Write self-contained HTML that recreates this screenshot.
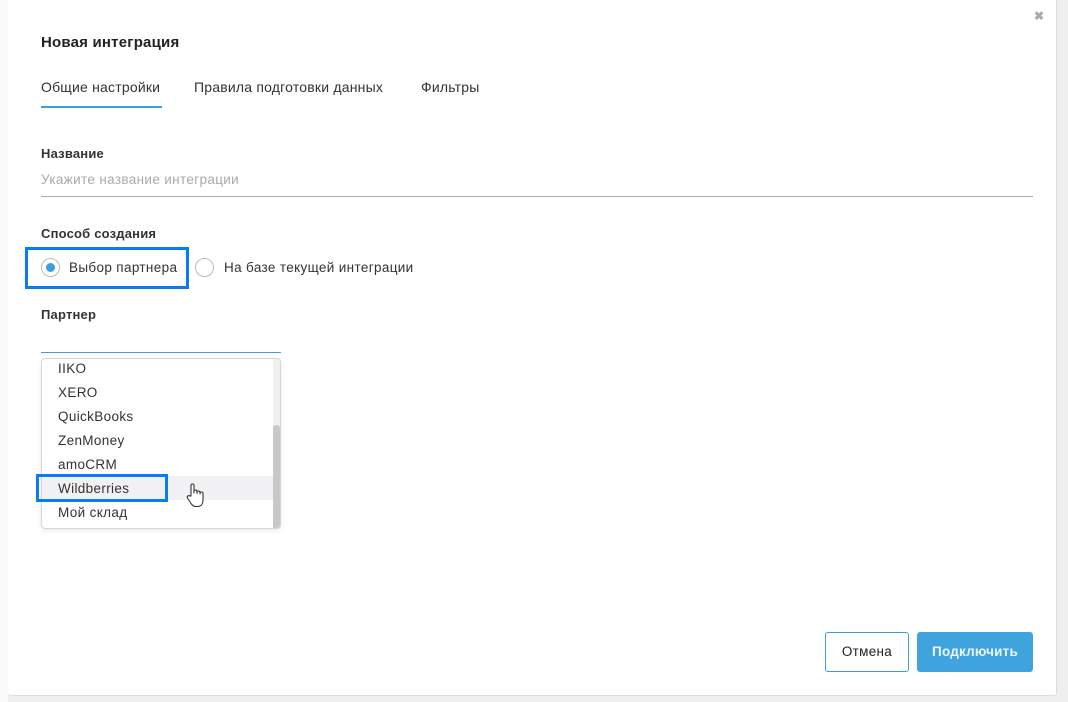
<!DOCTYPE html>
<html><head><meta charset="utf-8"><style>
*{margin:0;padding:0;box-sizing:border-box}
body{width:1068px;height:702px;background:#efefef;font-family:"Liberation Sans",sans-serif;position:relative;overflow:hidden;color:#222}
.left{position:absolute;left:0;top:0;width:8px;height:702px;background:#fafafa}
.modal{position:absolute;left:8px;top:0;width:1049px;height:696px;background:#fff;border-right:1px solid #ddd;border-bottom:1px solid #ddd;border-radius:0 0 3px 3px}
.abs{position:absolute}
.close{left:1026px;top:9px;font-size:12px;color:#aaa;font-weight:bold}
h1{position:absolute;left:33px;top:34px;font-size:15px;font-weight:bold;color:#222;letter-spacing:.2px}
.tab{position:absolute;top:79px;font-size:14px;color:#333;letter-spacing:.2px}
.lbl{position:absolute;left:33px;font-size:13px;font-weight:bold;color:#333;letter-spacing:.2px}
.t{letter-spacing:.35px}
.radio{position:absolute;width:19px;height:19px;border:1px solid #bbb;border-radius:50%}
.list{position:absolute;left:33px;top:358px;width:240px;height:171px;border:1px solid #d6d6d6;border-radius:4px;box-shadow:0 2px 6px rgba(0,0,0,.08);overflow:hidden}
.item{position:absolute;left:16px;font-size:13.5px;color:#333;letter-spacing:.35px}
</style></head><body>
<div class="left"></div>
<div class="modal">
<div class="abs close">✖</div>
<h1>Новая интеграция</h1>
<div class="tab" style="left:33px">Общие настройки</div>
<div class="abs" style="left:33px;top:106px;width:121px;height:2px;background:#3aa0dc"></div>
<div class="tab" style="left:186px">Правила подготовки данных</div>
<div class="tab" style="left:413px">Фильтры</div>
<div class="lbl" style="top:146px">Название</div>
<div class="abs t" style="left:33px;top:172px;font-size:13.5px;color:#aaa">Укажите название интеграции</div>
<div class="abs" style="left:33px;top:196px;width:992px;height:1px;background:#aaa"></div>
<div class="lbl" style="top:226px">Способ создания</div>
<div class="abs" style="left:17px;top:247px;width:164px;height:42px;border:3px solid #0a7cf0"></div>
<div class="radio" style="left:33px;top:258px"><div style="position:absolute;left:4px;top:4px;width:9px;height:9px;border-radius:50%;background:#3aa0dc"></div></div>
<div class="abs t" style="left:61px;top:260px;font-size:13.5px;color:#333">Выбор партнера</div>
<div class="radio" style="left:187px;top:258px"></div>
<div class="abs t" style="left:216px;top:260px;font-size:13.5px;color:#333">На базе текущей интеграции</div>
<div class="lbl" style="top:307px">Партнер</div>
<div class="abs" style="left:33px;top:352px;width:240px;height:1px;background:#3aa0dc"></div>
<div class="list">
<div class="abs" style="left:0;top:117px;width:232px;height:24px;background:#f1f1f3"></div>
<div class="abs" style="right:0;top:0;width:7px;height:171px;background:#f1f1f1"></div>
<div class="abs" style="right:0;top:66px;width:7px;height:105px;background:#c8c8c8;border-radius:3px"></div>
<div class="item" style="top:2px">IIKO</div>
<div class="item" style="top:26px">XERO</div>
<div class="item" style="top:50px">QuickBooks</div>
<div class="item" style="top:74px">ZenMoney</div>
<div class="item" style="top:98px">amoCRM</div>
<div class="item" style="top:122px">Wildberries</div>
<div class="item" style="top:146px">Мой склад</div>
</div>
<div class="abs" style="left:28px;top:474px;width:132px;height:28px;border:3px solid #0a7cf0"></div>
<svg class="abs" style="left:177px;top:482px" width="20" height="26" viewBox="0 0 20 26"><path d="M6 14V3.5a1.5 1.5 0 0 1 3 0V11V9.5a1.5 1.5 0 0 1 3 0V11.5V10.5a1.5 1.5 0 0 1 3 0V12V11.5a1.5 1.5 0 0 1 3 0V18c0 4-2 6.5-5.5 6.5H11c-2.5 0-3.5-1-5-3L2.5 16a1.5 1.5 0 0 1 2.3-1.9Z" fill="#fff" stroke="#333" stroke-width="1.1" stroke-linejoin="round"/></svg>
<div class="abs" style="left:817px;top:632px;width:84px;height:40px;border:1px solid #3aa0dc;border-radius:3px;font-size:13.5px;text-align:center;line-height:38px;color:#222;letter-spacing:.3px">Отмена</div>
<div class="abs" style="left:909px;top:632px;width:116px;height:40px;background:#3fa4de;border-radius:3px;font-size:13.5px;font-weight:bold;text-align:center;line-height:40px;color:#eef6fc;letter-spacing:.2px">Подключить</div>
</div>
</body></html>
